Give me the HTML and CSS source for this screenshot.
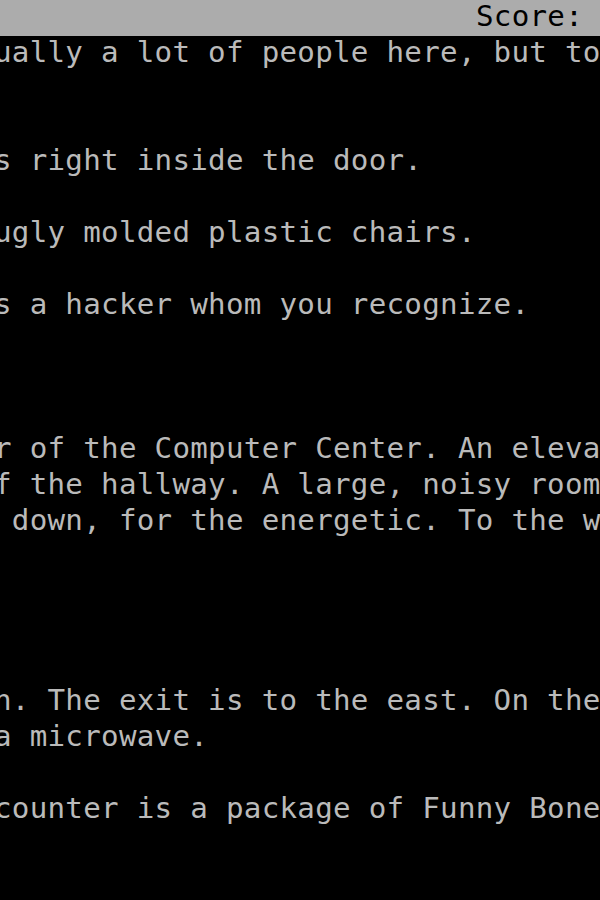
FILE: index.html
```html
<!DOCTYPE html>
<html>
<head>
<meta charset="utf-8">
<link rel="stylesheet" href="styles.css">
</head>
<body>
<div class="screen">
  <div class="status"><span class="score">Score:</span></div>
  <pre class="transcript">ually a lot of people here, but today


s right inside the door.

ugly molded plastic chairs.

s a hacker whom you recognize.



r of the Computer Center. An elevator
f the hallway. A large, noisy room
 down, for the energetic. To the west




n. The exit is to the east. On the
a microwave.

counter is a package of Funny Bones.
</pre>
</div>
</body>
</html>
```
FILE: styles.css
```css
html, body {
  margin: 0;
  padding: 0;
  background: #000;
}
.screen {
  width: 600px;
  height: 900px;
  overflow: hidden;
  background: #000;
  font-family: "DejaVu Sans Mono", monospace;
  font-size: 29.2px;
  letter-spacing: 0.27px;
}
.status {
  height: 36px;
  background: #acacac;
  padding-left: 476px;
  white-space: nowrap;
  overflow: hidden;
}
.score {
  display: block;
  line-height: 32px;
  color: #000;
}
.transcript {
  margin: -2px 0 0 -6px;
  font-family: inherit;
  font-size: inherit;
  line-height: 36px;
  color: #bababa;
  white-space: pre;
}
```
